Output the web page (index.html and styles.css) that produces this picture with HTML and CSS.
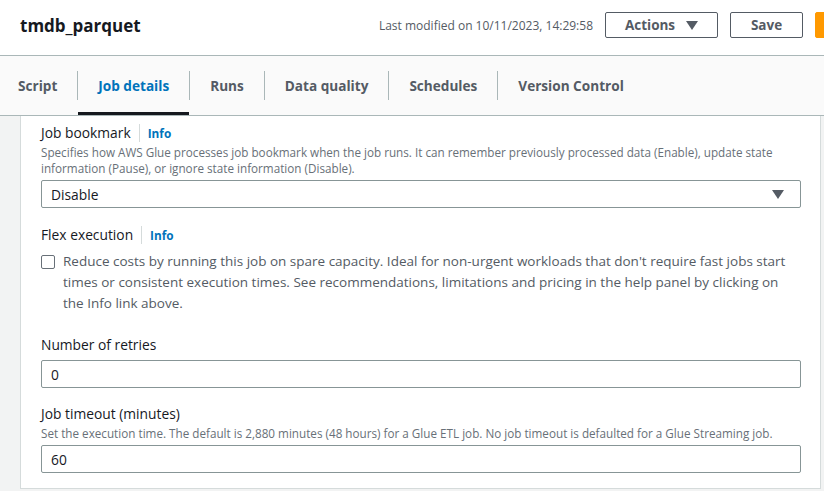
FILE: index.html
```html
<!DOCTYPE html>
<html>
<head>
<meta charset="utf-8">
<link rel="stylesheet" href="styles.css">
</head>
<body>
<header class="header">
  <h1 class="title">tmdb_parquet</h1>
  <div class="header-right">
    <span class="meta">Last modified on 10/11/2023, 14:29:58</span>
    <button class="btn btn-actions">Actions <svg class="caret" width="12" height="9" viewBox="0 0 12 9"><path d="M0 0h12L6 9z" fill="#545b64"/></svg></button>
    <button class="btn btn-save">Save</button>
    <button class="btn btn-primary" aria-label="Run"></button>
  </div>
</header>
<nav class="tabs">
  <div class="tab tab-first">Script</div>
  <div class="tab active">Job details</div>
  <div class="tab">Runs</div>
  <div class="tab">Data quality</div>
  <div class="tab">Schedules</div>
  <div class="tab tab-last">Version Control</div>
</nav>
<main class="main">
  <section class="panel">
    <div class="field f-bookmark">
      <div class="label">Job bookmark <span class="info">Info</span></div>
      <p class="desc">Specifies how AWS Glue processes job bookmark when the job runs. It can remember previously processed data (Enable), update state information (Pause), or ignore state information (Disable).</p>
      <div class="select"><span>Disable</span><svg width="12" height="9" viewBox="0 0 12 9"><path d="M0 0h12L6 9z" fill="#545b64"/></svg></div>
    </div>
    <div class="field f-flex">
      <div class="label">Flex execution <span class="info">Info</span></div>
      <label class="check">
        <span class="box"></span>
        <span class="check-text">Reduce costs by running this job on spare capacity. Ideal for non-urgent workloads that don't require fast jobs start times or consistent execution times. See recommendations, limitations and pricing in the help panel by clicking on the Info link above.</span>
      </label>
    </div>
    <div class="field f-retries">
      <div class="label">Number of retries</div>
      <div class="input">0</div>
    </div>
    <div class="field f-timeout">
      <div class="label">Job timeout (minutes)</div>
      <p class="desc">Set the execution time. The default is 2,880 minutes (48 hours) for a Glue ETL job. No job timeout is defaulted for a Glue Streaming job.</p>
      <div class="input">60</div>
    </div>
  </section>
</main>
</body>
</html>
```

FILE: styles.css
```css
* { box-sizing: border-box; }
html, body {
  margin: 0;
  padding: 0;
  width: 824px;
  height: 491px;
  overflow: hidden;
  background: #f2f3f3;
  font-family: "Open Sans", "Noto Sans", sans-serif;
  color: #16191f;
}
.header {
  height: 56px;
  background: #ffffff;
  border-bottom: 1px solid #aab7b8;
  display: flex;
  align-items: flex-start;
  padding: 12px 0 0 20px;
  white-space: nowrap;
}
.title {
  margin: 0;
  font-size: 17px;
  font-weight: 700;
  line-height: 28px;
  color: #16191f;
}
.header-right {
  margin-left: auto;
  display: flex;
  align-items: center;
  gap: 12px;
  height: 26px;
  margin-right: -73px;
}
.meta {
  font-size: 12px;
  color: #545b64;
}
.btn {
  height: 26px;
  border: 1px solid #545b64;
  border-radius: 2px;
  background: #fff;
  font-family: "Open Sans", sans-serif;
  font-weight: 700;
  font-size: 13.5px;
  color: #545b64;
  padding: 0;
  display: flex;
  align-items: center;
  justify-content: center;
}
.btn-actions { width: 113px; gap: 11px; }
.caret { margin-top: 1px; }
.btn-save { width: 73px; }
.btn-primary {
  width: 82px;
  background: #ff9900;
  border-color: #ff9900;
}
.tabs {
  height: 60px;
  background: #fafafa;
  border-bottom: 1px solid #aab7b8;
  display: flex;
  align-items: stretch;
}
.tab {
  position: relative;
  padding: 0 20px;
  display: flex;
  align-items: center;
  font-size: 13.6px;
  font-weight: 700;
  color: #545b64;
}
.tab-first { padding-left: 18px; }
.tab + .tab::before {
  content: "";
  position: absolute;
  left: -1px;
  top: 15px;
  height: 29px;
  width: 1px;
  background: #aab7b8;
}
.tab.active { color: #0073bb; }
.tab.active::after {
  content: "";
  position: absolute;
  left: 0;
  right: 0;
  bottom: 0;
  height: 3px;
  background: #16191f;
}
.tab + .tab { margin-left: 1px; }
.main {
  padding: 0 3px 0 20px;
}
.panel {
  background: #fff;
  border-left: 1px solid #d5dbdb;
  border-right: 1px solid #d5dbdb;
  border-bottom: 1px solid #d5dbdb;
  padding: 6px 19px 15px 20px;
}
.field { display: flex; flex-direction: column; }
.f-flex { margin-top: 16px; }
.f-retries { margin-top: 20px; }
.f-timeout { margin-top: 15px; }
.label {
  font-size: 13.8px;
  line-height: 22px;
  color: #16191f;
  display: flex;
  align-items: center;
}
.info {
  font-size: 11.8px;
  font-weight: 700;
  color: #0073bb;
  margin-left: 8px;
  padding-left: 8px;
  border-left: 1px solid #d5dbdb;
  line-height: 18px;
}
.desc {
  margin: 0;
  font-size: 11.7px;
  line-height: 16px;
  color: #687078;
}
.select, .input {
  height: 28px;
  border: 1px solid #879596;
  border-radius: 2px;
  display: flex;
  align-items: center;
  padding: 0 16px 0 9px;
  font-size: 13.8px;
  color: #16191f;
  margin-top: 4px;
}
.select { justify-content: space-between; }
.f-flex .check { margin-top: 5px; }
.check {
  display: flex;
  align-items: flex-start;
  gap: 8px;
}
.box {
  flex: none;
  width: 14px;
  height: 14px;
  border: 1px solid #687078;
  border-radius: 2px;
  margin-top: 4px;
}
.check-text {
  font-size: 13.5px;
  line-height: 21px;
  color: #545b64;
}
```
